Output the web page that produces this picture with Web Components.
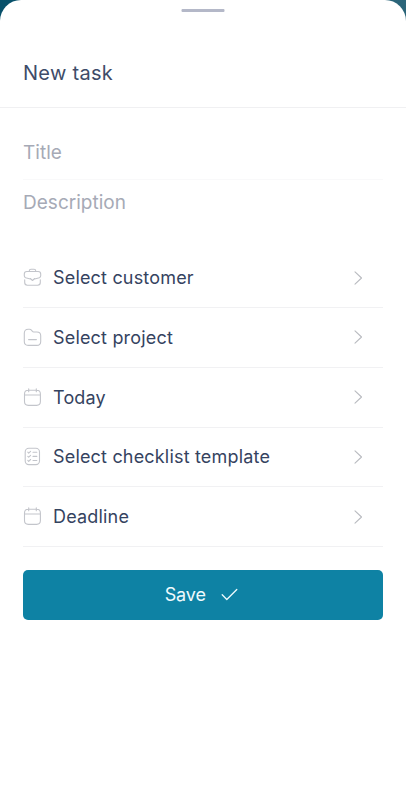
<!DOCTYPE html>
<html lang="en">
<head>
<meta charset="utf-8">
<title>New task</title>
<style>
html, body { margin: 0; height: 100%; }
body { background: linear-gradient(90deg, #07506a, #2b6579); font-family: Inter, "Liberation Sans", sans-serif; overflow: hidden; }
</style>
</head>
<body>
<task-sheet heading="New task">
  <text-field label="Title" lined></text-field>
  <text-field label="Description"></text-field>
  <picker-list>
    <picker-row icon="briefcase">Select customer</picker-row>
    <picker-row icon="folder">Select project</picker-row>
    <picker-row icon="calendar">Today</picker-row>
    <picker-row icon="checklist">Select checklist template</picker-row>
    <picker-row icon="calendar">Deadline</picker-row>
  </picker-list>
  <save-button>Save</save-button>
</task-sheet>
<script>
const define = (name, html, setup) => customElements.define(name, class extends HTMLElement {
  connectedCallback() {
    if (this.shadowRoot) return;
    this.attachShadow({ mode: "open" }).innerHTML = html;
    if (setup) setup(this, this.shadowRoot);
  }
});

const icons = {
  briefcase: '<path d="M6.300 3.400V2.800Q6.300 1.200 8 1.200h3q1.700 0 1.700 1.600v.6M3.800 3.500h11.400q2.500 0 2.500 2.500v1.800q0 1.400-1.300 1.900l-4.700 1.300M7.300 11 2.600 9.700Q1.300 9.200 1.300 7.800V6q0-2.500 2.500-2.500M7.300 10.500 9.500 12.500l2.200-2M1.700 11.800v2.700q0 2.700 2.700 2.700h10.200q2.700 0 2.700-2.700v-2.700"/>',
  folder: '<path d="M1.300 5.200q0-3.900 3.900-3.900h1.300q1.300 0 2.100 1l.8 1.100q.5.600 1.300.6h3.200q3.800 0 3.800 3.800v5.700q0 3.900-3.900 3.900H5.200q-3.900 0-3.900-3.900zM5.600 11.600h7.800"/>',
  calendar: '<path d="M5.700.8v3M13.300.8v3M5.300 2.300h8.400q3.700 0 3.700 3.700v7.600q0 3.800-3.800 3.800H5.300q-3.800 0-3.800-3.800V6q0-3.700 3.800-3.700zM1.700 7h15.600"/>',
  checklist: '<rect x="2.200" y="1.300" width="14.300" height="16.300" rx="3.600"/><path d="m4.800 5.200.9.900 1.900-1.800M10 5.300h3.800M4.800 9.300l.9.900 1.900-1.800M10 9.400h3.800M4.800 13.400l.9.900 1.900-1.800M10 13.500h3.800"/>'
};

define("task-sheet", `
<style>
:host { display: flex; flex-direction: column; height: 100vh; background: #fff; border-radius: 21px 21px 0 0; overflow: hidden; }
header { box-sizing: border-box; height: 108px; border-bottom: 1px solid #f0f0f2; display: flex; flex-direction: column; flex: none; }
.grip { width: 43px; height: 3px; margin: 9px auto 0; background: #b4b8c8; border-radius: 1px; transform: translateX(-.5px); }
h1 { margin: 46px 0 0 23px; font-weight: 400; font-size: 20px; line-height: 30px; letter-spacing: .28px; color: #3e4c69; }
main { padding: 21px 23px 0; }
</style>
<header><div class="grip"></div><h1></h1></header>
<main><slot></slot></main>`,
(el, root) => { root.querySelector("h1").textContent = el.getAttribute("heading"); });

define("text-field", `
<style>
:host { display: flex; align-items: center; box-sizing: border-box; height: 46px; padding-bottom: 2px; font-size: 19px; letter-spacing: .02px; color: #a6aab6; }
:host([lined]) { height: 51px; padding-bottom: 3px; border-bottom: 1px solid #f9f9fa; }
</style><span></span>`,
(el, root) => { root.querySelector("span").textContent = el.getAttribute("label"); });

define("picker-list", `
<style>:host { display: grid; grid-auto-rows: 59.750px; margin-top: 22.300px; }</style><slot></slot>`);

define("picker-row", `
<style>
:host { display: flex; align-items: center; box-sizing: border-box; border-bottom: 1px solid #f1f1f3; color: #35435f; font-size: 18px; letter-spacing: .18px; }
.icon { width: 19px; height: 19px; margin: 0 11.500px 0 -.5px; }
.label { flex: 1; white-space: nowrap; }
.arrow { width: 10px; height: 14px; margin-right: 20px; }
svg { display: block; fill: none; stroke: #c3c5cb; stroke-width: 1.1; stroke-linecap: round; stroke-linejoin: round; }
.arrow { stroke: #b9bbc0; }
</style>
<svg class="icon" viewBox="0 0 19 19"></svg>
<span class="label"><slot></slot></span>
<svg class="arrow" viewBox="0 0 10 14"><path d="m2 .8 6.500 6.200L2 13.200"/></svg>`,
(el, root) => { root.querySelector(".icon").innerHTML = icons[el.getAttribute("icon")]; });

define("save-button", `
<style>
:host { display: block; margin: 22.900px -.4px 0; }
button { width: 100%; height: 50.500px; border: 0; border-radius: 5px; background: #0e82a4; color: #eefafd; display: flex; align-items: center; justify-content: center; gap: 15.500px; padding: 0 3px 1px 0; font: 18px Inter, sans-serif; letter-spacing: -.15px; }
svg { width: 17px; height: 13px; fill: none; stroke: currentColor; stroke-width: 1.300; stroke-linecap: round; stroke-linejoin: round; }
</style>
<button><slot></slot><svg viewBox="0 0 17 13"><path d="m1.200 6.800 4.600 4.700L15.800 1.500"/></svg></button>`);
</script>
</body>
</html>
